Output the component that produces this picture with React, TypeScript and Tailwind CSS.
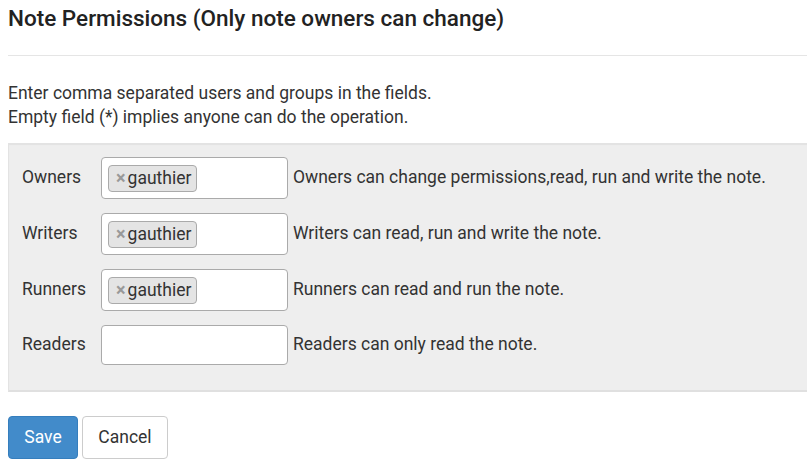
const rows = [
  { label: 'Owners', users: ['gauthier'], help: 'Owners can change permissions,read, run and write the note.' },
  { label: 'Writers', users: ['gauthier'], help: 'Writers can read, run and write the note.' },
  { label: 'Runners', users: ['gauthier'], help: 'Runners can read and run the note.' },
  { label: 'Readers', users: [], help: 'Readers can only read the note.' },
]

function TagInput({ users }: { users: string[] }) {
  if (users.length === 0) {
    return <input className="w-[187px] h-[40px] bg-white border border-[#aaaaaa] rounded-[4px] outline-none" />
  }
  return (
    <div className="w-[187px] h-[42px] bg-white border border-[#aaaaaa] rounded-[4px] flex items-start pl-[6px] pt-[7px]">
      {users.map((u) => (
        <span
          key={u}
          className="h-[27px] flex items-center bg-[#e4e4e4] border border-[#aaaaaa] rounded-[4px] pl-[7px] pr-[5px] leading-none"
        >
          <span className="text-[#999999] font-bold text-[18px] mr-[2px]">×</span>
          <span className="text-[17.5px] text-[#333333]">{u}</span>
        </span>
      ))}
    </div>
  )
}

export default function App() {
  return (
    <div className="min-h-screen bg-white overflow-hidden pl-[8px] text-[#333333] font-['Roboto','Liberation_Sans',sans-serif]">
      <h4 className="pt-[6px] text-[22.5px] leading-[24.75px] font-medium text-[#222222]">
        Note Permissions (Only note owners can change)
      </h4>
      <div className="mt-[24px] border-t border-[#e5e5e5]" />

      <div className="mt-[25px] text-[17.5px] leading-[24.5px]">
        <p>Enter comma separated users and groups in the fields.</p>
        <p>Empty field (*) implies anyone can do the operation.</p>
      </div>

      <div className="mt-[13px] mr-[-10px] bg-[#eeeeee] border border-[#e3e3e3] border-b-2 border-b-[#e0e0e0] shadow-[inset_0_1px_1px_rgba(0,0,0,0.05)] pt-[13px] pb-[25px] pl-[13px]">
        <div className="flex flex-col gap-[14px]">
          {rows.map((r) => (
            <div key={r.label} className="flex items-center text-[17.5px] leading-[24px]">
              <label className="w-[79px] -mt-[1px]">{r.label}</label>
              <TagInput users={r.users} />
              <span className="ml-[5px] -mt-[1px]">{r.help}</span>
            </div>
          ))}
        </div>
      </div>

      <div className="mt-[24px] flex gap-[4px]">
        <button className="w-[70px] h-[43px] bg-[#428bca] border border-[#357ebd] rounded-[4px] text-white text-[17.5px]">
          Save
        </button>
        <button className="w-[86px] h-[43px] bg-white border border-[#cccccc] rounded-[4px] text-[#333333] text-[17.5px]">
          Cancel
        </button>
      </div>
    </div>
  )
}
